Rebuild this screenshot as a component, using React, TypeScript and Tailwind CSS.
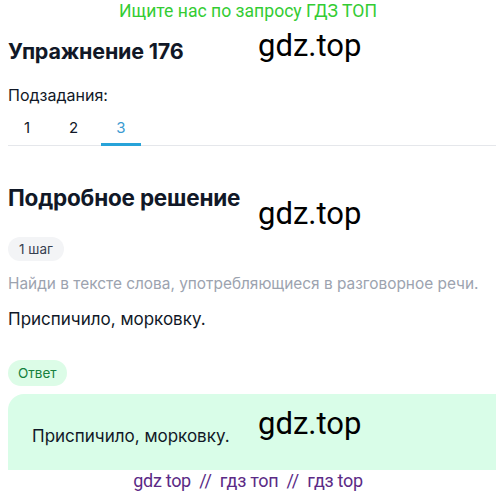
export default function App() {
  return (
    <div className="relative w-[496px] h-[496px] overflow-hidden bg-white font-['Inter','Noto_Sans',sans-serif] text-[#111827]">
      <p className="text-center text-[17.6px] leading-[22px] text-[#33cc33] font-['Roboto',sans-serif]">
        Ищите нас по запросу ГДЗ ТОП
      </p>

      <div className="pl-2">
        <h1 className="mt-[15px] text-[21.5px] leading-[28px] font-bold tracking-[-0.2px]">Упражнение 176</h1>
        <p className="mt-[19px] text-[16px] leading-[22px]">Подзадания:</p>
        <div className="mt-[6px] flex border-b border-[#e5e7eb]">
          <span className="w-[38px] text-center text-[15px] leading-[22px] pt-[5px] pb-[6px]">1</span>
          <span className="w-[55px] text-center text-[15px] leading-[22px] pt-[5px] pb-[6px]">2</span>
          <span className="w-[40px] text-center text-[15px] leading-[22px] pt-[5px] pb-[4px] text-[#3b9bd1] border-b-[3px] border-[#27a3d9] -mb-px">3</span>
        </div>

        <h2 className="mt-[38px] text-[22.5px] leading-[28px] font-bold tracking-[-0.2px]">Подробное решение</h2>
        <div className="mt-[25px] w-fit rounded-full bg-[#f3f4f6] px-[11px] py-[3px] text-[13.5px] leading-[18px] text-[#374151]">1 шаг</div>
        <p className="mt-[12px] text-[15.4px] leading-[22px] text-[#9ca3af]">
          Найди в тексте слова, употребляющиеся в разговорное речи.
        </p>
        <p className="mt-[13px] text-[17px] leading-[22px]">Приспичило, морковку.</p>

        <div className="mt-[30px] w-fit rounded-full bg-[#dcfce7] px-[10px] py-[4px] text-[13.5px] leading-[18px] text-[#15803d]">Ответ</div>
        <div className="mt-[8px] h-[76px] rounded-tl-[16px] bg-[#d9fde8] pl-6 flex items-center">
          <p className="text-[17px] leading-[22px] pt-[8px]">Приспичило, морковку.</p>
        </div>
      </div>

      <p className="text-center text-[18px] leading-[22px] text-[#5b2a86] font-['Roboto',sans-serif] tracking-[-0.3px] whitespace-pre">
        {"gdz top  //  гдз топ  //  гдз top"}
      </p>

      <span className="absolute left-[258px] top-[28px] text-[31px] leading-[36px] font-['Roboto',sans-serif] text-black">gdz.top</span>
      <span className="absolute left-[258px] top-[196px] text-[31px] leading-[36px] font-['Roboto',sans-serif] text-black">gdz.top</span>
      <span className="absolute left-[258px] top-[406px] text-[31px] leading-[36px] font-['Roboto',sans-serif] text-black">gdz.top</span>
    </div>
  );
}
